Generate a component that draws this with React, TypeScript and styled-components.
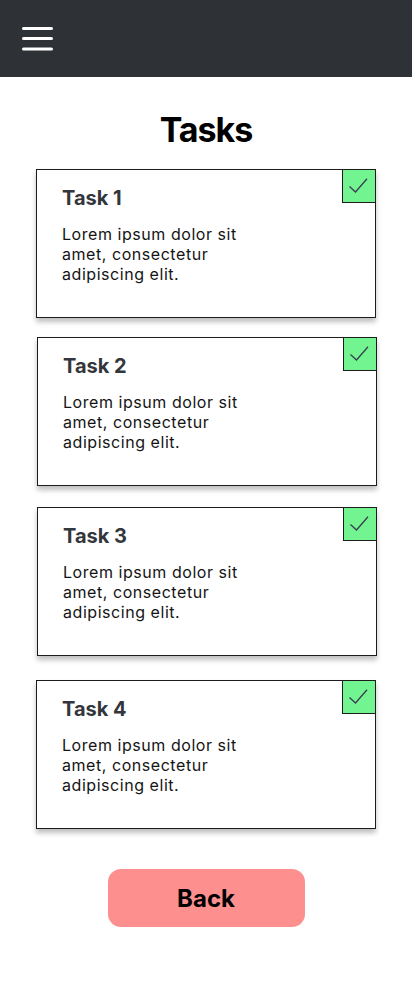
import React from "react";
import styled, { createGlobalStyle } from "styled-components";

const Global = createGlobalStyle`
  * { box-sizing: border-box; }
  body { margin: 0; background: #ffffff; font-family: Inter, "Liberation Sans", sans-serif; }
`;

const Page = styled.div`
  width: 412px;
  min-height: 984px;
  background: #ffffff;
  display: flex;
  flex-direction: column;
`;

const TopBar = styled.header`
  height: 77px;
  background: #2e3135;
  display: flex;
  align-items: center;
  padding-left: 22px;
`;

const MenuButton = styled.button`
  border: 0;
  background: none;
  padding: 0;
  width: 31px;
  height: 26px;
  display: flex;
  cursor: pointer;
`;

const Main = styled.main`
  display: flex;
  flex-direction: column;
  align-items: center;
  padding-top: 33px;
`;

const Title = styled.h1`
  margin: 0;
  font-size: 34px;
  line-height: 40px;
  font-weight: 700;
  letter-spacing: -1px;
  color: #000;
`;

const Card = styled.section<{ $gap: number; $shift: number }>`
  position: relative;
  width: 340px;
  height: 149px;
  margin-top: ${(p) => p.$gap}px;
  margin-left: ${(p) => p.$shift * 2}px;
  border: 1px solid #1c1c1c;
  background: #fff;
  box-shadow: 0 4px 5px rgba(0, 0, 0, 0.25);
  padding: 16px 0 0 25px;
`;

const CardTitle = styled.h2`
  margin: 0 0 14px;
  font-size: 20px;
  line-height: 24px;
  font-weight: 700;
  color: #33363b;
`;

const CardText = styled.p`
  margin: 0;
  width: 200px;
  font-size: 16px;
  line-height: 20px;
  letter-spacing: 0.55px;
  color: #141414;
`;

const Check = styled.div`
  position: absolute;
  top: -1px;
  right: -1px;
  width: 34px;
  height: 34px;
  background: #72f591;
  border: 1px solid #1c1c1c;
`;

const BackButton = styled.button`
  margin-top: 40px;
  width: 197px;
  height: 58px;
  border: 0;
  border-radius: 13px;
  background: #fd8f8f;
  font-family: Inter, "Liberation Sans", sans-serif;
  font-size: 24px;
  font-weight: 700;
  color: #000;
  cursor: pointer;
`;

const tasks = [
  { name: "Task 1", gap: 19, shift: 0 },
  { name: "Task 2", gap: 19, shift: 1 },
  { name: "Task 3", gap: 21, shift: 1 },
  { name: "Task 4", gap: 24, shift: 0 },
];

export default function App() {
  return (
    <Page>
      <Global />
      <TopBar>
        <MenuButton aria-label="Menu">
          <svg width="31" height="26" viewBox="0 0 31 26" fill="none">
            <path d="M1.5 2.5H29.5M1.5 12.5H29.5M1.5 23H29.5" stroke="#fff" strokeWidth="3" strokeLinecap="round" />
          </svg>
        </MenuButton>
      </TopBar>
      <Main>
        <Title>Tasks</Title>
        {tasks.map((t) => (
          <Card key={t.name} $gap={t.gap} $shift={t.shift}>
            <CardTitle>{t.name}</CardTitle>
            <CardText>Lorem ipsum dolor sit amet, consectetur adipiscing elit.</CardText>
            <Check>
              <svg width="32" height="32" viewBox="0 0 32 32" fill="none">
                <path d="M6.5 16.5L12.5 22L24 8.8" stroke="#3a3d50" strokeWidth="1.3" />
              </svg>
            </Check>
          </Card>
        ))}
        <BackButton>Back</BackButton>
      </Main>
    </Page>
  );
}
